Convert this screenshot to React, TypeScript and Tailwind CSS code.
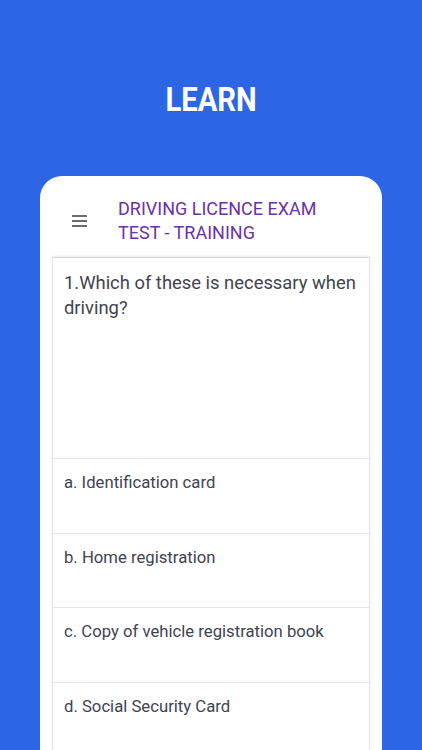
import React from 'react'

const options = [
  'a. Identification card',
  'b. Home registration',
  'c. Copy of vehicle registration book',
  'd. Social Security Card',
]

export default function App() {
  return (
    <div className="h-[750px] w-full overflow-hidden bg-[#2c66e4] font-['Roboto',sans-serif]">
      <div className="pt-[81px] text-center">
        <span className="inline-block scale-x-[0.86] text-[34px] font-bold leading-[36px] text-white">LEARN</span>
      </div>

      <div className="mx-[40px] mt-[58px] h-[600px] rounded-t-[22px] bg-white px-[12px]">
        {/* header */}
        <div className="flex items-center pt-[21px] pb-[12px]">
          <div className="flex w-[66px] justify-start pl-[20px]">
            <svg width="15" height="12" viewBox="0 0 15 12" className="text-[#6b6b6b]">
              <rect x="0" y="0" width="15" height="2" fill="currentColor" />
              <rect x="0" y="5" width="15" height="2" fill="currentColor" />
              <rect x="0" y="10" width="15" height="2" fill="currentColor" />
            </svg>
          </div>
          <div className="text-[18px] leading-[24px] text-[#6b32a8]">
            DRIVING LICENCE EXAM
            <br />
            TEST - TRAINING
          </div>
        </div>

        {/* question box */}
        <div className="border border-[#e4e4ea] border-t-[#d4d4d8] shadow-[0_-1px_2px_rgba(0,0,0,0.08)]">
          <div className="h-[200px] px-[11px] pt-[12px] text-[18.4px] leading-[25px] text-[#3f4450]">
            1.Which of these is necessary when driving?
          </div>
          {options.map((o) => (
            <div key={o} className="h-[74.5px] border-t border-[#e4e4ea] px-[11px] pt-[13px] text-[16.7px] leading-[22px] text-[#3f4450]">
              {o}
            </div>
          ))}
        </div>
      </div>
    </div>
  )
}
